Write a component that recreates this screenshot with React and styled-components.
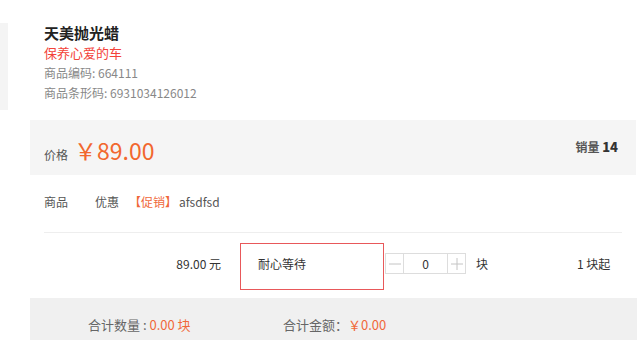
import React from "react";
import styled, { createGlobalStyle } from "styled-components";

const GlobalStyle = createGlobalStyle`
  html, body {
    margin: 0;
    padding: 0;
    background: #fff;
  }
  body {
    font-family: "Noto Sans CJK SC", "Noto Sans", sans-serif;
    color: #333;
    width: 640px;
    height: 340px;
    overflow: hidden;
  }
  * {
    box-sizing: border-box;
  }
`;

const StyledPage = styled.div`
  width: 640px;
`;

const StyledInfo = styled.section`
  margin-top: 23px;
  height: 87px;
  padding: 0 0 0 36px;
  border-left: 8px solid #f4f4f4;
`;

const StyledTitle = styled.h1`
  margin: 0;
  font-size: 15px;
  line-height: 20px;
  font-weight: 700;
  color: #222;
`;

const StyledSlogan = styled.p`
  margin: 0;
  font-size: 13px;
  line-height: 20px;
  color: #f3433a;
`;

const StyledMeta = styled.p`
  margin: 0;
  font-size: 12px;
  line-height: 20px;
  color: #888;
`;

const StyledPriceBox = styled.div`
  margin: 10px 4px 0 30px;
  height: 55px;
  background: #f5f5f5;
  display: flex;
  align-items: center;
  justify-content: space-between;
  padding: 0 18px 0 14px;
`;

const StyledPriceGroup = styled.div`
  display: flex;
  align-items: baseline;
  gap: 6px;
  padding-top: 4px;
`;

const StyledLabel = styled.span`
  font-size: 12px;
  color: #555;
`;

const StyledPrice = styled.span`
  font-size: 23px;
  line-height: 30px;
  color: #f2672e;
`;

const StyledSales = styled.div`
  font-size: 12px;
  font-weight: 700;
  color: #555;
  padding-bottom: 2px;

  b {
    font-size: 13px;
    color: #333;
  }
`;

const StyledPromoRow = styled.div`
  width: 578px;
  margin-left: 44px;
  height: 58px;
  padding-bottom: 4px;
  display: flex;
  align-items: center;
  border-bottom: 1px solid #eee;
  font-size: 12px;
`;

const StyledPromoCell = styled.span`
  width: ${({ $w }) => $w || "auto"};
  color: #555;
`;

const StyledTag = styled.span`
  color: #f0683a;
  margin-right: 2px;
`;

const StyledOrderRow = styled.div`
  display: flex;
  align-items: flex-start;
  padding-top: 10px;
  height: 65px;
  font-size: 12px;
  color: #333;
`;

const StyledUnitPrice = styled.div`
  width: 221px;
  line-height: 42px;
  text-align: right;
  margin-right: 19px;
`;

const StyledNote = styled.div`
  width: 144px;
  height: 47px;
  border: 1px solid #e8585a;
  padding: 12px 0 0 17px;
  line-height: 16px;
`;

const StyledStepper = styled.div`
  display: flex;
  margin: 10px 0 0 1px;
  height: 21px;
  border: 1px solid #ddd;
`;

const StyledStepButton = styled.span`
  width: 18px;
  display: flex;
  align-items: center;
  justify-content: center;
  border-left: ${({ $side }) => ($side === "right" ? "1px solid #ddd" : "none")};
  border-right: ${({ $side }) => ($side === "left" ? "1px solid #ddd" : "none")};

  svg {
    display: block;
  }
`;

const StyledQty = styled.span`
  width: 43px;
  text-align: center;
  line-height: 19px;
  font-size: 12px;
  color: #333;
`;

const StyledUnit = styled.span`
  line-height: 42px;
  margin-left: ${({ $gap }) => $gap};
`;

const StyledSummary = styled.div`
  margin: 0 3px 0 30px;
  height: 56px;
  background: #f0f0f0;
  display: flex;
  padding: 17px 0 0 58px;
  font-size: 13px;
  line-height: 20px;
  color: #666;
`;

const StyledSumItem = styled.span`
  width: ${({ $w }) => $w || "auto"};
`;

const StyledAccent = styled.span`
  color: #f0683a;
`;

const MinusIcon = () => (
  <svg width="12" height="12" viewBox="0 0 12 12">
    <path d="M0 6h12" stroke="#c4c4c4" strokeWidth="1" />
  </svg>
);

const PlusIcon = () => (
  <svg width="12" height="12" viewBox="0 0 12 12">
    <path d="M0 6h12M6 0v12" stroke="#c4c4c4" strokeWidth="1" />
  </svg>
);

const Stepper = () => (
  <StyledStepper>
    <StyledStepButton $side="left">
      <MinusIcon />
    </StyledStepButton>
    <StyledQty>0</StyledQty>
    <StyledStepButton $side="right">
      <PlusIcon />
    </StyledStepButton>
  </StyledStepper>
);

const App = () => {
  return (
    <StyledPage>
      <GlobalStyle />
      <StyledInfo>
        <StyledTitle>天美抛光蜡</StyledTitle>
        <StyledSlogan>保养心爱的车</StyledSlogan>
        <StyledMeta>商品编码: 664111</StyledMeta>
        <StyledMeta>商品条形码: 6931034126012</StyledMeta>
      </StyledInfo>

      <StyledPriceBox>
        <StyledPriceGroup>
          <StyledLabel>价格</StyledLabel>
          <StyledPrice>￥89.00</StyledPrice>
        </StyledPriceGroup>
        <StyledSales>
          销量 <b>14</b>
        </StyledSales>
      </StyledPriceBox>

      <StyledPromoRow>
        <StyledPromoCell $w="51px">商品</StyledPromoCell>
        <StyledPromoCell $w="34px">优惠</StyledPromoCell>
        <StyledTag>【促销】</StyledTag>
        <StyledPromoCell>afsdfsd</StyledPromoCell>
      </StyledPromoRow>

      <StyledOrderRow>
        <StyledUnitPrice>89.00 元</StyledUnitPrice>
        <StyledNote>耐心等待</StyledNote>
        <Stepper />
        <StyledUnit $gap="10px">块</StyledUnit>
        <StyledUnit $gap="89px">1 块起</StyledUnit>
      </StyledOrderRow>

      <StyledSummary>
        <StyledSumItem $w="195px">
          合计数量 : <StyledAccent>0.00 块</StyledAccent>
        </StyledSumItem>
        <StyledSumItem>
          合计金额：<StyledAccent>￥0.00</StyledAccent>
        </StyledSumItem>
      </StyledSummary>
    </StyledPage>
  );
};

export default App;
